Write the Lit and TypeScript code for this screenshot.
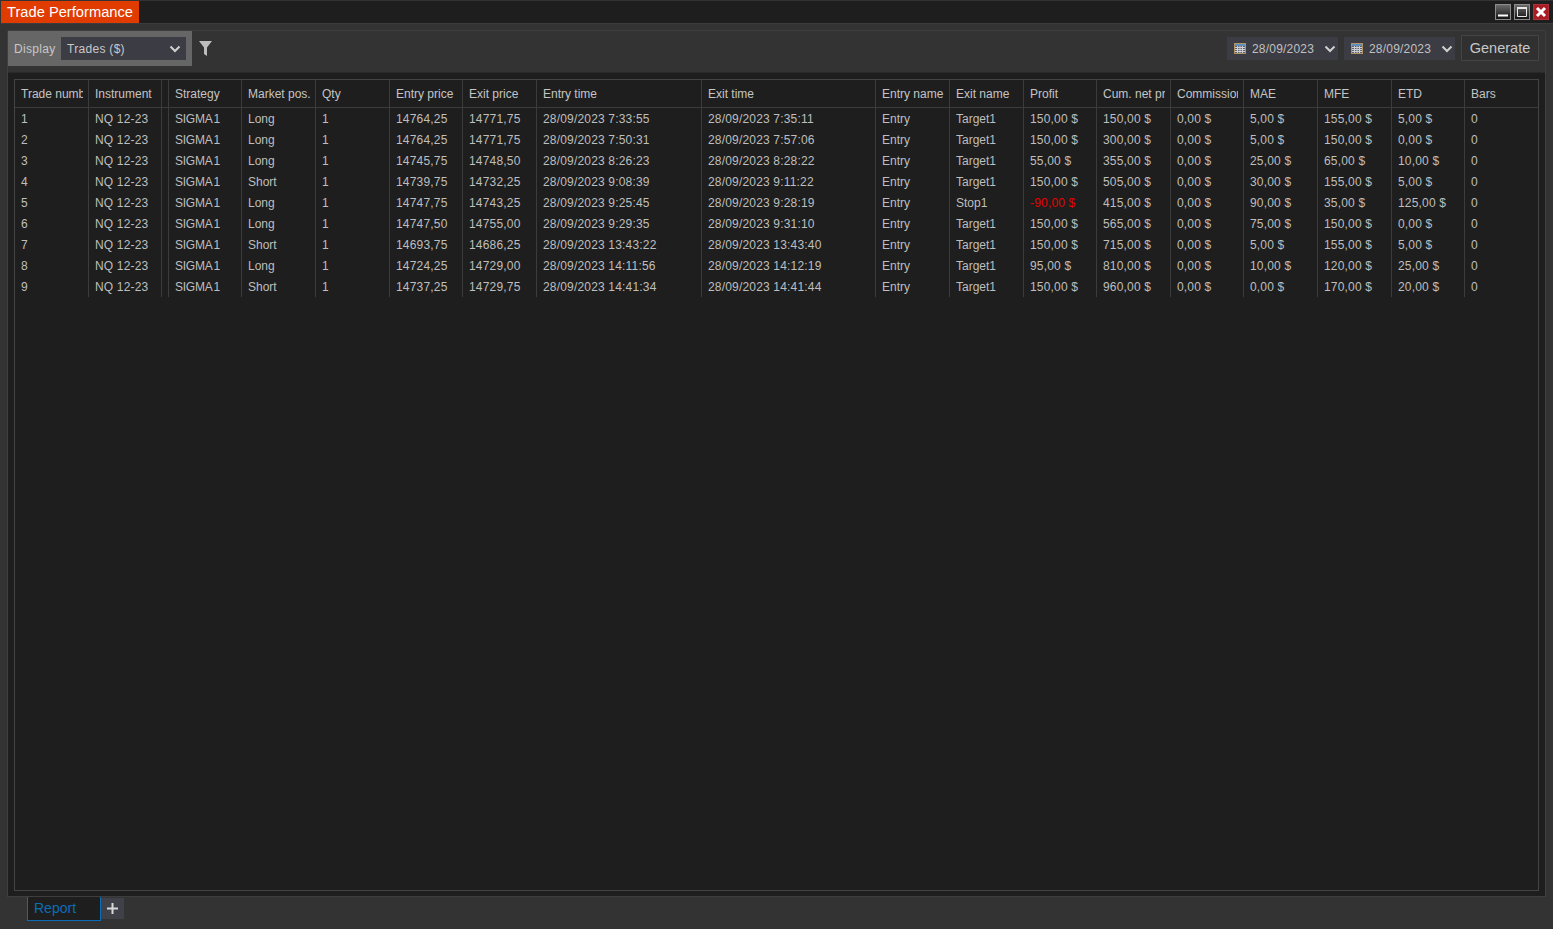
import { LitElement, html, css, svg } from "lit";
import { customElement } from "lit/decorators.js";

const COLUMNS = [
  "Trade number", "Instrument", "", "Strategy", "Market pos.", "Qty", "Entry price", "Exit price",
  "Entry time", "Exit time", "Entry name", "Exit name", "Profit", "Cum. net profit", "Commission",
  "MAE", "MFE", "ETD", "Bars",
];

// trade, instrument, gap, strategy, side, qty, entry, exit, times, names, money columns, bars
const TRADES = [
  ["1", "NQ 12-23", "", "SIGMA 1", "Long", "1", "14764,25", "14771,75", "28/09/2023 7:33:55", "28/09/2023 7:35:11", "Entry", "Target1", "150,00 $", "150,00 $", "0,00 $", "5,00 $", "155,00 $", "5,00 $", "0"],
  ["2", "NQ 12-23", "", "SIGMA 1", "Long", "1", "14764,25", "14771,75", "28/09/2023 7:50:31", "28/09/2023 7:57:06", "Entry", "Target1", "150,00 $", "300,00 $", "0,00 $", "5,00 $", "150,00 $", "0,00 $", "0"],
  ["3", "NQ 12-23", "", "SIGMA 1", "Long", "1", "14745,75", "14748,50", "28/09/2023 8:26:23", "28/09/2023 8:28:22", "Entry", "Target1", "55,00 $", "355,00 $", "0,00 $", "25,00 $", "65,00 $", "10,00 $", "0"],
  ["4", "NQ 12-23", "", "SIGMA 1", "Short", "1", "14739,75", "14732,25", "28/09/2023 9:08:39", "28/09/2023 9:11:22", "Entry", "Target1", "150,00 $", "505,00 $", "0,00 $", "30,00 $", "155,00 $", "5,00 $", "0"],
  ["5", "NQ 12-23", "", "SIGMA 1", "Long", "1", "14747,75", "14743,25", "28/09/2023 9:25:45", "28/09/2023 9:28:19", "Entry", "Stop1", "-90,00 $", "415,00 $", "0,00 $", "90,00 $", "35,00 $", "125,00 $", "0"],
  ["6", "NQ 12-23", "", "SIGMA 1", "Long", "1", "14747,50", "14755,00", "28/09/2023 9:29:35", "28/09/2023 9:31:10", "Entry", "Target1", "150,00 $", "565,00 $", "0,00 $", "75,00 $", "150,00 $", "0,00 $", "0"],
  ["7", "NQ 12-23", "", "SIGMA 1", "Short", "1", "14693,75", "14686,25", "28/09/2023 13:43:22", "28/09/2023 13:43:40", "Entry", "Target1", "150,00 $", "715,00 $", "0,00 $", "5,00 $", "155,00 $", "5,00 $", "0"],
  ["8", "NQ 12-23", "", "SIGMA 1", "Long", "1", "14724,25", "14729,00", "28/09/2023 14:11:56", "28/09/2023 14:12:19", "Entry", "Target1", "95,00 $", "810,00 $", "0,00 $", "10,00 $", "120,00 $", "25,00 $", "0"],
  ["9", "NQ 12-23", "", "SIGMA 1", "Short", "1", "14737,25", "14729,75", "28/09/2023 14:41:34", "28/09/2023 14:41:44", "Entry", "Target1", "150,00 $", "960,00 $", "0,00 $", "0,00 $", "170,00 $", "20,00 $", "0"],
];

const chevron = svg`<svg class="chev" width="12" height="8" viewBox="0 0 12 8"><path d="M1.500 1.500 6 6l4.500-4.500" fill="none" stroke="#d0d0d0" stroke-width="2"/></svg>`;

const calendar = svg`<svg class="cal" width="12" height="11" viewBox="0 0 12 11">
  <rect x="0.500" y="0.500" width="11" height="10" fill="#5c6068" stroke="#b09468"/>
  <rect x="1" y="1" width="10" height="2" fill="#5f8fc0"/>
  <path d="M1 4.500h10M1 6.500h10M1 8.500h10M3.500 3v7M6 3v7M8.500 3v7" stroke="#ccd0d6" stroke-width="1"/>
</svg>`;

const cellClass = (col: number, value: string) => {
  if (col === 2) return "cell gap";
  if (col === 3) return "cell sigma";
  if (value.startsWith("-")) return "cell num neg";
  return /\d/.test(value) && col !== 11 ? "cell num" : "cell";
};

@customElement("app-root")
export class AppRoot extends LitElement {
  static styles = css`
    :host {
      display: flex;
      flex-direction: column;
      height: 929px;
      background: #333334;
      font-family: "Liberation Sans", Arial, sans-serif;
      font-size: 12px;
      color: #c8c8c8;
      overflow: hidden;
    }
    .titlebar {
      height: 22px;
      margin: 1px 0 0 1px;
      flex: none;
      display: flex;
      justify-content: space-between;
      background: #1e1e1e;
      border-bottom: 1px solid #3c3c3c;
    }
    .title {
      width: 138px;
      height: 22px;
      box-sizing: border-box;
      padding-left: 6px;
      background: #e03c00;
      color: #fff;
      font-size: 14.7px;
      line-height: 22px;
      white-space: nowrap;
    }
    .winbtns {
      display: flex;
      gap: 3px;
      padding: 3px 4px 0 0;
    }
    .winbtn {
      width: 16px;
      height: 16px;
      box-sizing: border-box;
      border: 1px solid #8c8c8c;
      background: linear-gradient(#6a6a6a, #141414);
      display: flex;
      align-items: center;
      justify-content: center;
    }
    .winbtn.close {
      border-color: #b03038;
      background: #a81c24;
    }
    .panel {
      flex: 1;
      min-height: 0;
      margin: 7px 7px 0 7px;
      display: flex;
      flex-direction: column;
      background: #1e1e1e;
      border: 1px solid #3e3e3e;
      border-top: none;
    }
    .toolbar {
      height: 41px;
      flex: none;
      display: flex;
      align-items: flex-start;
      justify-content: space-between;
      background: #333334;
      border-bottom: 1px solid #2a2a2a;
      box-shadow: 0 -1px 0 #3e3e3e;
    }
    .left, .right {
      display: flex;
      align-items: flex-start;
    }
    .display {
      width: 184px;
      height: 35px;
      box-sizing: border-box;
      padding: 6px 6px 0 6px;
      display: flex;
      justify-content: space-between;
      background: #666;
      line-height: 24px;
      letter-spacing: 0.3px;
      color: #c8c8c8;
    }
    .select {
      width: 125px;
      height: 23px;
      box-sizing: border-box;
      padding: 0 5px 0 6px;
      display: flex;
      align-items: center;
      justify-content: space-between;
      background: #3c3c44;
      color: #c8c8c8;
    }
    .filter {
      margin: 10px 0 0 7px;
    }
    .right {
      padding: 4px 6px 0 0;
    }
    .date {
      width: 111px;
      height: 23px;
      box-sizing: border-box;
      margin: 2px 6px 0 0;
      padding: 0 2px 0 7px;
      display: flex;
      align-items: center;
      background: #3c3c44;
      color: #c0c0c0;
      letter-spacing: 0.2px;
    }
    .cal {
      margin-right: 6px;
    }
    .date .chev {
      margin-left: auto;
    }
    .generate {
      width: 78px;
      height: 26px;
      box-sizing: border-box;
      border: 1px solid #444;
      background: #303031;
      font-size: 14.5px;
      line-height: 24px;
      text-align: center;
      color: #c8c8c8;
    }
    .table-box {
      flex: 1;
      min-height: 0;
      margin: 6px 6px 5px 6px;
      border: 1px solid #444;
      overflow: hidden;
    }
    .grid {
      display: grid;
      grid-template-columns: 74px 73px 7px 73px 74px 74px 73px 74px 165px 174px 74px 74px 73px 74px 73px 74px 74px 73px 73px;
      grid-template-rows: 28px;
      grid-auto-rows: 21px;
    }
    .cell, .head {
      box-sizing: border-box;
      padding-left: 6px;
      border-right: 1px solid #3c3c3c;
      white-space: nowrap;
      line-height: 21px;
      color: #bebebe;
    }
    .cell .txt {
      padding-top: 1px;
      height: 20px;
      line-height: 21px;
    }
    .head {
      border-bottom: 1px solid #3c3c3c;
      color: #c4c4c4;
    }
    .head .txt {
      padding-top: 1px;
      height: 26px;
      line-height: 27px;
    }
    .gap {
      padding-left: 0;
    }
    .txt {
      display: block;
      margin-right: 5px;
      overflow: hidden;
    }
    .gap .txt {
      margin-right: 0;
    }
    .cell:nth-child(19n), .head:nth-child(19n) {
      border-right: none;
    }
    .num {
      letter-spacing: 0.18px;
    }
    .sigma {
      word-spacing: -1.4px;
      letter-spacing: -0.25px;
    }
    .neg .txt {
      color: #e60000;
    }
    .tabs {
      height: 32px;
      flex: none;
      display: flex;
      align-items: flex-start;
      padding-left: 27px;
    }
    .tab {
      width: 74px;
      height: 24px;
      box-sizing: border-box;
      padding-left: 6px;
      border: 1px solid #0c6cb8;
      border-top: none;
      background: #1e1e1e;
      color: #0c6cb8;
      font-size: 14px;
      line-height: 23px;
    }
    .add {
      width: 23px;
      height: 21px;
      margin-top: 1px;
      display: flex;
      align-items: center;
      justify-content: center;
      background: #404048;
    }
  `;

  render() {
    return html`
      <div class="titlebar">
        <div class="title">Trade Performance</div>
        <div class="winbtns">
          <div class="winbtn">
            <svg width="14" height="14" viewBox="0 0 14 14"><path d="M2 10.500h10" stroke="#fff" stroke-width="2"/></svg>
          </div>
          <div class="winbtn">
            <svg width="14" height="14" viewBox="0 0 14 14"><path d="M2.500 3.500h9v8h-9z" fill="none" stroke="#e8e8e8"/><path d="M2 3h10" stroke="#e8e8e8" stroke-width="2"/></svg>
          </div>
          <div class="winbtn close">
            <svg width="14" height="14" viewBox="0 0 14 14"><path d="M3 3l8 8M11 3l-8 8" stroke="#fff" stroke-width="3"/></svg>
          </div>
        </div>
      </div>
      <div class="panel">
        <div class="toolbar">
          <div class="left">
            <div class="display">
              <span>Display</span>
              <div class="select"><span>Trades ($)</span>${chevron}</div>
            </div>
            <svg class="filter" width="13" height="15" viewBox="0 0 13 15"><path d="M0 0h13L8 6.500V15L5 13V6.500z" fill="#bdbdbd"/></svg>
          </div>
          <div class="right">
            <div class="date">${calendar}<span>28/09/2023</span>${chevron}</div>
            <div class="date">${calendar}<span>28/09/2023</span>${chevron}</div>
            <div class="generate">Generate</div>
          </div>
        </div>
        <div class="table-box">
          <div class="grid">
            ${COLUMNS.map((c, i) => html`<div class="head ${i === 2 ? "gap" : ""}"><span class="txt">${c}</span></div>`)}
            ${TRADES.flatMap((row) =>
              row.map((v, i) => html`<div class=${cellClass(i, v)}><span class="txt">${v}</span></div>`)
            )}
          </div>
        </div>
      </div>
      <div class="tabs">
        <div class="tab">Report</div>
        <div class="add">
          <svg width="11" height="11" viewBox="0 0 11 11"><path d="M5.500 0v11M0 5.500h11" stroke="#d8d8d8" stroke-width="2"/></svg>
        </div>
      </div>
    `;
  }
}
